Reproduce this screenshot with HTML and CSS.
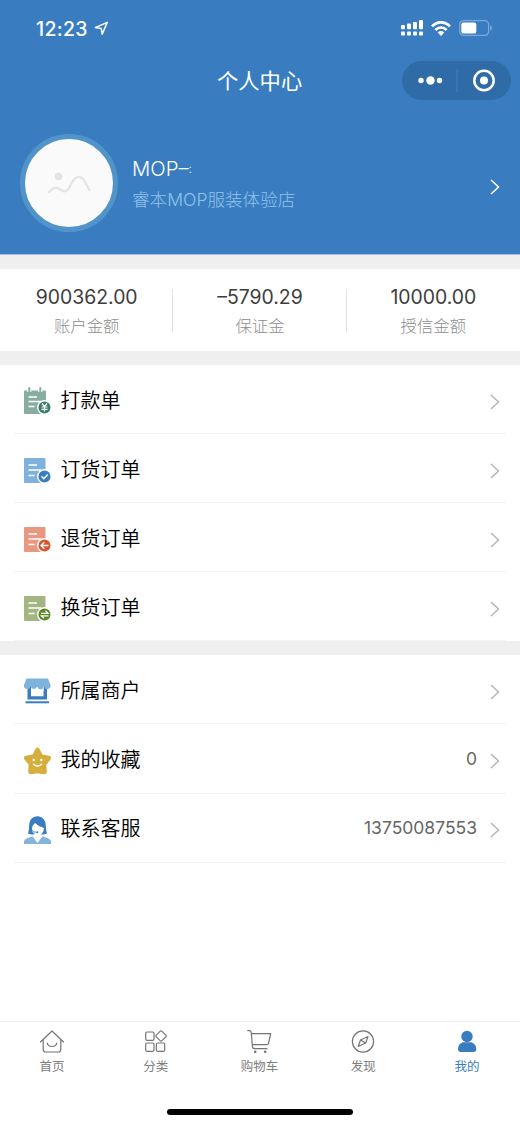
FILE: index.html
```html
<!DOCTYPE html>
<html lang="zh-CN">
<head>
<meta charset="utf-8">
<title>个人中心</title>
<link rel="stylesheet" href="styles.css">
</head>
<body>
<div class="app">
  <header class="header">
    <div class="status">
      <div class="clock"><span class="time">12:23</span>
        <svg class="locate" width="15" height="15" viewBox="0 0 15 15"><path d="M1.300 6.600 13.200 1.400 8.200 13.200 7.200 7.600Z" fill="none" stroke="#fff" stroke-width="1.500" stroke-linejoin="round"/></svg>
      </div>
      <div class="signals">
        <svg width="22" height="16" viewBox="0 0 22 16" fill="#fff"><rect x="0" y="5" width="4" height="4.300" rx="1"/><rect x="6" y="3.600" width="4" height="5.700" rx="1"/><rect x="12" y="2" width="4" height="7.300" rx="1"/><rect x="18" y="0" width="4" height="9.300" rx="1"/><rect x="0" y="11.600" width="4" height="4" rx="1"/><rect x="6" y="11.600" width="4" height="4" rx="1"/><rect x="12" y="11.600" width="4" height="4" rx="1"/><rect x="18" y="11.600" width="4" height="4" rx="1"/></svg>
        <svg class="wifi" width="20" height="15" viewBox="0 0 20 15" fill="none" stroke="#fff"><path d="M1 5.400C6-.1 14-.1 19 5.400" stroke-width="2.700"/><path d="M4.400 9C7.600 5.700 12.400 5.700 15.600 9" stroke-width="2.600"/><path d="M6.800 11.500Q10 8.600 13.200 11.500L10 15Z" fill="#fff" stroke="none"/></svg>
        <svg class="battery" width="33" height="16" viewBox="0 0 33 16"><rect x=".6" y=".6" width="29" height="14.800" rx="4" fill="none" stroke="#78a9d8" stroke-width="1.200"/><rect x="2.300" y="2.400" width="15" height="11.200" rx="2.200" fill="#fff"/><path d="M31 5.300q2 1 2 2.700t-2 2.700z" fill="#78a9d8"/></svg>
      </div>
    </div>
    <div class="navbar">
      <h1 class="title">个人中心</h1>
      <div class="capsule">
        <svg width="109" height="39" viewBox="0 0 109 39" fill="#fff"><circle cx="19" cy="19.500" r="2.700"/><circle cx="28.500" cy="19.500" r="4.200"/><circle cx="37.500" cy="19.500" r="2.700"/><path d="M55 8v23" stroke="#4080bb"/><circle cx="82" cy="19.500" r="9.700" fill="none" stroke="#fff" stroke-width="2.500"/><circle cx="82" cy="19.500" r="4"/></svg>
      </div>
    </div>
    <div class="profile">
      <div class="avatar">
        <svg width="88" height="88" viewBox="0 0 88 88"><circle cx="33.500" cy="37.500" r="3.800" fill="#e4e4e4"/><path d="M24 53C30 47 32 48 36 51C40 54 43 52 46 45C50 37 55 36 59 41L64.500 51" fill="none" stroke="#e4e4e4" stroke-width="2.200" stroke-linecap="round" stroke-linejoin="round"/></svg>
      </div>
      <div class="who">
        <div class="name">MOP–<span class="mark">:</span></div>
        <div class="shop">睿本MOP服装体验店</div>
      </div>
      <svg class="chev light" width="10" height="16" viewBox="0 0 10 16"><path d="M1 1 8.500 8 1 15"/></svg>
    </div>
  </header>

  <section class="stats">
    <div class="stat"><div class="num">900362.00</div><div class="label">账户金额</div></div>
    <div class="stat"><div class="num">–5790.29</div><div class="label">保证金</div></div>
    <div class="stat"><div class="num">10000.00</div><div class="label">授信金额</div></div>
  </section>

  <section class="list">
    <div class="row">
      <svg class="ico" width="28" height="29" viewBox="0 0 28 29"><path d="M1 3.500H21Q22 3.500 22 4.500V27H1Q0 27 0 26V4.500Q0 3.500 1 3.500Z" fill="#86ada0"/><path d="M5.300 0V5M16.300 0V5" stroke="#fff" stroke-width="4"/><path d="M5.300 1V4.500M16.300 1V4.500" stroke="#86ada0" stroke-width="2" stroke-linecap="round"/><path d="M4.500 10h8.500M4.500 14.500h12.500M4.500 19.500h6" stroke="#fff" stroke-width="1.500"/><circle cx="20.500" cy="20.500" r="7.500" fill="#fff"/><circle cx="20.500" cy="20.500" r="6" fill="#3b7d6b"/><path d="M18 16.500 20.500 19.500 23 16.500M20.500 19.500V24.500M17.500 20h6M17.500 22.300h6" fill="none" stroke="#fff" stroke-width="1.200"/></svg>
      <span class="text">打款单</span>
      <svg class="chev" width="10" height="16" viewBox="0 0 10 16"><path d="M1 1 8.500 8 1 15"/></svg>
    </div>
    <div class="row">
      <svg class="ico" width="28" height="29" viewBox="0 0 28 29"><rect y="2" width="21.500" height="25" rx="1" fill="#7fb1dd"/><path d="M4.500 9h8.500M4.500 14h12.500M4.500 19.500h6" stroke="#fff" stroke-width="1.500"/><circle cx="20.500" cy="20.500" r="7.500" fill="#fff"/><circle cx="20.500" cy="20.500" r="6" fill="#397dc5"/><path d="m17.500 20.300 2.300 2.400 4-4.200" fill="none" stroke="#fff" stroke-width="1.500"/></svg>
      <span class="text">订货订单</span>
      <svg class="chev" width="10" height="16" viewBox="0 0 10 16"><path d="M1 1 8.500 8 1 15"/></svg>
    </div>
    <div class="row">
      <svg class="ico" width="28" height="29" viewBox="0 0 28 29"><rect y="2" width="21.500" height="25" rx="1" fill="#e89880"/><path d="M4.500 9h8.500M4.500 14h12.500M4.500 19.500h6" stroke="#fff" stroke-width="1.500"/><circle cx="20.500" cy="20.500" r="7.500" fill="#fff"/><circle cx="20.500" cy="20.500" r="6" fill="#dc542e"/><path d="M24.500 20.500h-7M20.300 17.300l-3.200 3.200 3.200 3.200" fill="none" stroke="#fff" stroke-width="1.500"/></svg>
      <span class="text">退货订单</span>
      <svg class="chev" width="10" height="16" viewBox="0 0 10 16"><path d="M1 1 8.500 8 1 15"/></svg>
    </div>
    <div class="row">
      <svg class="ico" width="28" height="29" viewBox="0 0 28 29"><rect y="2" width="21.500" height="25" rx="1" fill="#a3b681"/><path d="M4.500 9h8.500M4.500 14h12.500M4.500 19.500h6" stroke="#fff" stroke-width="1.500"/><circle cx="20.500" cy="20.500" r="7.500" fill="#fff"/><circle cx="20.500" cy="20.500" r="6" fill="#5c8526"/><path d="M17 19.300h7l-2.500-2.500M24.500 21.800h-7l2.500 2.500" fill="none" stroke="#fff" stroke-width="1.300"/></svg>
      <span class="text">换货订单</span>
      <svg class="chev" width="10" height="16" viewBox="0 0 10 16"><path d="M1 1 8.500 8 1 15"/></svg>
    </div>
  </section>

  <section class="list">
    <div class="row">
      <svg class="ico" width="28" height="29" viewBox="0 0 28 29"><path d="M3.500 9H7V19.200H19.500V9H23V22.500H3.500Z" fill="#397dc0"/><path d="M1.500 25.300H25" stroke="#397dc0" stroke-width="2"/><path d="M7 9H19.500V14H7Z" fill="#fff"/><path d="M2.500 1.500H24L26.500 8A3.300 3.300 0 0 1 20 9.500 3.500 3.500 0 0 1 13.200 9.500 3.500 3.500 0 0 1 6.500 9.500 3.300 3.300 0 0 1 0 8Z" fill="#7fb3dc"/></svg>
      <span class="text">所属商户</span>
      <svg class="chev" width="10" height="16" viewBox="0 0 10 16"><path d="M1 1 8.500 8 1 15"/></svg>
    </div>
    <div class="row">
      <svg class="ico" width="28" height="29" viewBox="0 0 28 29"><path d="M13.500 3 16.800 9.500 24.700 11 20 17 20.500 25 13.500 24 6.500 25 7 17 2.300 11 10.200 9.500Z" fill="#d5ae3c" stroke="#d5ae3c" stroke-width="4.600" stroke-linejoin="round"/><circle cx="9.700" cy="13" r="1.300" fill="#fff"/><circle cx="17.300" cy="13" r="1.300" fill="#fff"/><path d="M9.500 17.300Q13.500 20.800 17.500 17.300" fill="none" stroke="#fff" stroke-width="1.400" stroke-linecap="round"/></svg>
      <span class="text">我的收藏</span>
      <span class="value">0</span>
      <svg class="chev" width="10" height="16" viewBox="0 0 10 16"><path d="M1 1 8.500 8 1 15"/></svg>
    </div>
    <div class="row">
      <svg class="ico" width="28" height="29" viewBox="0 0 28 29"><path d="M4 17.500Q5.200 14 5.200 9.500C5.200 4 8.500.300 13.500.300S21.800 4.500 21.800 9.500Q21.800 14 23 17.500Q20 19 17 18.300L10 18.300Q7 19 4 17.500Z" fill="#397dc0"/><path d="M8 12.500Q8 9.500 11 7 15 11 20 12 19.500 17.500 15.500 19V21L13.500 25 11 21V18Q8 16.500 8 12.500Z" fill="#fff"/><path d="M8.500 14.500Q10 16.500 13 16.300" fill="none" stroke="#397dc0" stroke-width=".8"/><circle cx="13.300" cy="16.300" r="1" fill="#397dc0"/><path d="M0 28V25.500Q0 23.500 3 22.300L8.500 20.300 13.500 27 18.500 20.300 24 22.300Q27 23.500 27 25.500V28Z" fill="#82b4dc"/></svg>
      <span class="text">联系客服</span>
      <span class="value">13750087553</span>
      <svg class="chev" width="10" height="16" viewBox="0 0 10 16"><path d="M1 1 8.500 8 1 15"/></svg>
    </div>
  </section>

  <nav class="tabs">
    <div class="tab"><svg width="26" height="24" viewBox="0 0 26 24"><path d="M1.500 12 13 1 24.500 12M4.200 9.800V19.500Q4.200 22 6.700 22H19.300Q21.800 22 21.800 19.500V9.800M8.200 13.200Q9 16.500 13 16.500T17.800 13.200"/></svg><span>首页</span></div>
    <div class="tab"><svg width="26" height="24" viewBox="0 0 26 24"><rect x="2.700" y="2" width="8.300" height="8.300" rx="1.200"/><rect x="2.700" y="13" width="8.300" height="8.300" rx="1.200"/><rect x="13.400" y="13" width="8.300" height="8.300" rx="1.200"/><path d="M17.300 1.200Q18 .5 18.700 1.200L23 5.400Q23.600 6 23 6.700L18.700 10.900Q18 11.500 17.300 10.900L13.100 6.700Q12.500 6 13.100 5.400Z"/></svg><span>分类</span></div>
    <div class="tab"><svg width="26" height="24" viewBox="0 0 26 24"><path d="M1.800.700H3.500Q5 .7 5.200 2L6.500 17.200Q6.700 18.700 8.500 18.700H21M5.500 3.700H24.700L22.500 13.500Q22.300 14.700 20.500 14.700H6.300"/><circle cx="9.200" cy="21.700" r=".7" fill="#757575"/><circle cx="19.200" cy="21.700" r=".7" fill="#757575"/></svg><span>购物车</span></div>
    <div class="tab"><svg width="26" height="24" viewBox="0 0 26 24"><circle cx="13" cy="11.500" r="10.600"/><path d="M18 6.500 15.700 13 8.200 16.500 10.500 10ZM10.500 10 13 11.500M13 11.500 15.700 13"/></svg><span>发现</span></div>
    <div class="tab active"><svg width="26" height="24" viewBox="0 0 26 24"><circle cx="13" cy="6.500" r="5.700"/><path d="M4 19C4 15 7 12.300 10 12.300H16C19 12.300 22.300 15 22.300 19Q22.300 22 19.500 22H6.500Q4 22 4 19Z"/></svg><span>我的</span></div>
  </nav>
  <div class="home"></div>
</div>
</body>
</html>
```
FILE: styles.css
```css
* { box-sizing: border-box; }
body { margin: 0; background: #fff; font-family: Inter, "Noto Sans CJK SC", sans-serif; font-weight: 400; }
svg { display: block; flex: none; }
.app { width: 520px; height: 1125px; display: flex; flex-direction: column; background: #fff; overflow: hidden; }
.header { height: 255px; flex: none; background: #397dc0; color: #fff; border-bottom: 1px solid #9fc2e2; }
.status { height: 56px; padding: 0 28px 0 36px; display: flex; align-items: center; justify-content: space-between; }
.clock { display: flex; align-items: center; gap: 6px; }
.time { font-size: 19.500px; font-weight: 550; line-height: 24px; padding-top: 1px; letter-spacing: .3px; }
.signals { display: flex; align-items: center; gap: 8px; }
.navbar { height: 50px; padding: 0 9px 2px 217px; display: flex; align-items: center; justify-content: space-between; }
.title { margin: 0; padding-top: 2px; font-size: 21.300px; line-height: 30px; font-weight: 400; }
.capsule { width: 109px; height: 39px; border-radius: 20px; background: #2f6ca7; overflow: hidden; }
.profile { padding: 28px 20px 0; display: flex; align-items: flex-start; }
.avatar { width: 98px; height: 98px; flex: none; border: 5px solid #5194ca; border-radius: 50%; background: #fafafa; }
.who { margin-left: 14px; padding-top: 19px; flex: 1; }
.name { height: 31px; font-size: 20.300px; line-height: 31px; font-weight: 300; }
.mark { font-size: 12px; vertical-align: 3px; }
.shop { font-size: 17.600px; line-height: 31px; font-weight: 300; color: #91c3eb; }
.chev { fill: none; stroke: #b6b6b6; stroke-width: 1.500; margin-top: 2px; }
.chev.light { stroke: #fff; margin-top: 45px; }
.stats { height: 110px; flex: none; border: solid #efefef; border-width: 14px 0; display: flex; align-items: center; }
.stat { position: relative; width: 33.333%; height: 55px; text-align: center; }
.stat + .stat::before { content: ""; position: absolute; left: -1px; top: 6px; width: 1px; height: 43px; background: #e2e2e2; }
.num { font-size: 19.400px; line-height: 28px; color: #3d3d3d; }
.label { font-size: 16.400px; line-height: 31px; font-weight: 300; color: #8d8d8d; }
.list { padding: 0 14px; flex: none; }
.list + .list { border-top: 14px solid #efefef; }
.row { height: 69.100px; border-bottom: 1px solid #f4f4f4; padding: 3px 6px 0 10px; display: flex; align-items: center; }
.ico { margin-top: 2px; }
.text { font-size: 20px; line-height: 30px; margin-left: 8.500px; color: #000; flex: 1; font-weight: 350; }
.value { font-size: 17.500px; line-height: 22px; font-weight: 370; color: #666; margin: 0 13px 2px 0; }
.tabs { height: 66px; margin-top: auto; flex: none; border-top: 1px solid #f0f0f0; padding-top: 8px; display: flex; }
.tab { width: 103.800px; display: flex; flex-direction: column; align-items: center; color: #808080; font-size: 12.500px; line-height: 18px; gap: 4px; }
.tab svg { fill: none; stroke: #757575; stroke-width: 1.200; stroke-linejoin: round; stroke-linecap: round; }
.tab.active { color: #397dc0; }
.tab.active svg { fill: #397dc0; stroke: none; }
.home { width: 186px; height: 6px; flex: none; margin: 22px auto 10px 167px; border-radius: 3px; background: #000; }
```
